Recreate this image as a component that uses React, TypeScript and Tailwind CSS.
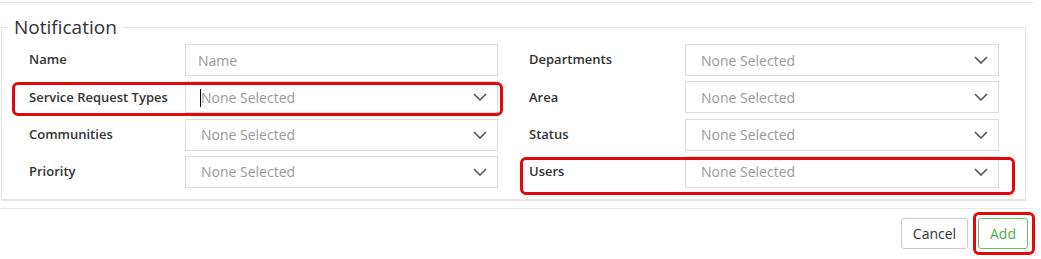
import type { ReactNode } from "react";

/* ================= FIELDS ================= */
const leftFields = ["Name", "Service Request Types", "Communities", "Priority"];
const rightFields = ["Departments", "Area", "Status", "Users"];

function Chevron() {
  return (
    <svg width="14" height="8" viewBox="0 0 14 8" className="shrink-0">
      <path d="M1 1 L7 7 L13 1" fill="none" stroke="#555" strokeWidth="1.6" />
    </svg>
  );
}

function MultiSelect({ cursor }: { cursor?: boolean }) {
  return (
    <div className="relative flex h-full w-full items-center justify-between border border-[#d9dce1] bg-white pl-[15px] pr-[10px]">
      {cursor && <span className="absolute left-[14px] top-[7px] h-[18px] w-[1px] bg-black" />}
      <span className="text-[14px] text-[#9a9a9a]">None Selected</span>
      <Chevron />
    </div>
  );
}

function Row({ label, children, inputW }: { label: string; children: ReactNode; inputW: string }) {
  return (
    <div className="flex h-[32px] items-center">
      <div className="w-[156px] text-[13px] font-semibold text-[#333]">{label}</div>
      <div className={`h-full ${inputW}`}>{children}</div>
    </div>
  );
}

/* ================= PAGE ================= */
export default function App() {
  return (
    <div
      className="relative h-[259px] w-[1041px] overflow-hidden bg-white"
      style={{ fontFamily: '"Open Sans", "Liberation Sans", sans-serif' }}
    >
      <div className="h-[2px]" />
      <div className="h-[1px] w-[1033px] bg-[#e6e6e6]" />
      <div className="h-[11px]" />

      {/* NOTIFICATION FIELDSET */}
      <fieldset className="ml-[1px] w-[1025px] border border-b-2 border-[#e6e6e6] pb-[11px] pt-[4px]">
        <legend className="ml-[6px] px-[6px] text-[19px] leading-[26px] text-[#333]">Notification</legend>

        <div className="flex pl-[27px]">
          {/* LEFT */}
          <div className="flex flex-col gap-y-[5.33px]">
            {leftFields.map((f) => (
              <div key={f} className="relative">
                <Row label={f} inputW="w-[313px]">
                  {f === "Name" ? (
                    <input
                      placeholder="Name"
                      className="h-full w-full border border-[#d9dce1] px-[12px] text-[14px] outline-none placeholder:text-[#9a9a9a]"
                    />
                  ) : (
                    <MultiSelect cursor={f === "Service Request Types"} />
                  )}
                </Row>
                {f === "Service Request Types" && (
                  <div className="pointer-events-none absolute -bottom-[3px] -left-[17px] -right-[5px] top-[1px] rounded-[6px] border-[3px] border-[#e10a0a]" />
                )}
              </div>
            ))}
          </div>

          {/* RIGHT */}
          <div className="ml-[31px] flex flex-col gap-y-[5.33px]">
            {rightFields.map((f) => (
              <div key={f} className="relative">
                <Row label={f} inputW="w-[314px]">
                  <MultiSelect />
                </Row>
                {f === "Users" && (
                  <div className="pointer-events-none absolute -bottom-[7px] -left-[9px] -right-[16px] top-[1px] rounded-[6px] border-[3px] border-[#e10a0a]" />
                )}
              </div>
            ))}
          </div>
        </div>
      </fieldset>

      <div className="h-[7px]" />
      <div className="h-[1px] w-[1033px] bg-[#e6e6e6]" />

      {/* FOOTER */}
      <div className="flex justify-end gap-[10px] pr-[13px] pt-[9px]">
        <button className="h-[31px] w-[67px] rounded-[3px] border border-[#ccc] bg-white text-[14px] text-[#333]">
          Cancel
        </button>
        <div className="relative">
          <button className="h-[31px] w-[50px] rounded-[3px] border border-[#6cc06c] bg-white text-[14px] text-[#4cae4c]">
            Add
          </button>
          <div className="pointer-events-none absolute -bottom-[6px] -left-[5px] -right-[7px] -top-[6px] rounded-[6px] border-[3px] border-[#e10a0a]" />
        </div>
      </div>
    </div>
  );
}
